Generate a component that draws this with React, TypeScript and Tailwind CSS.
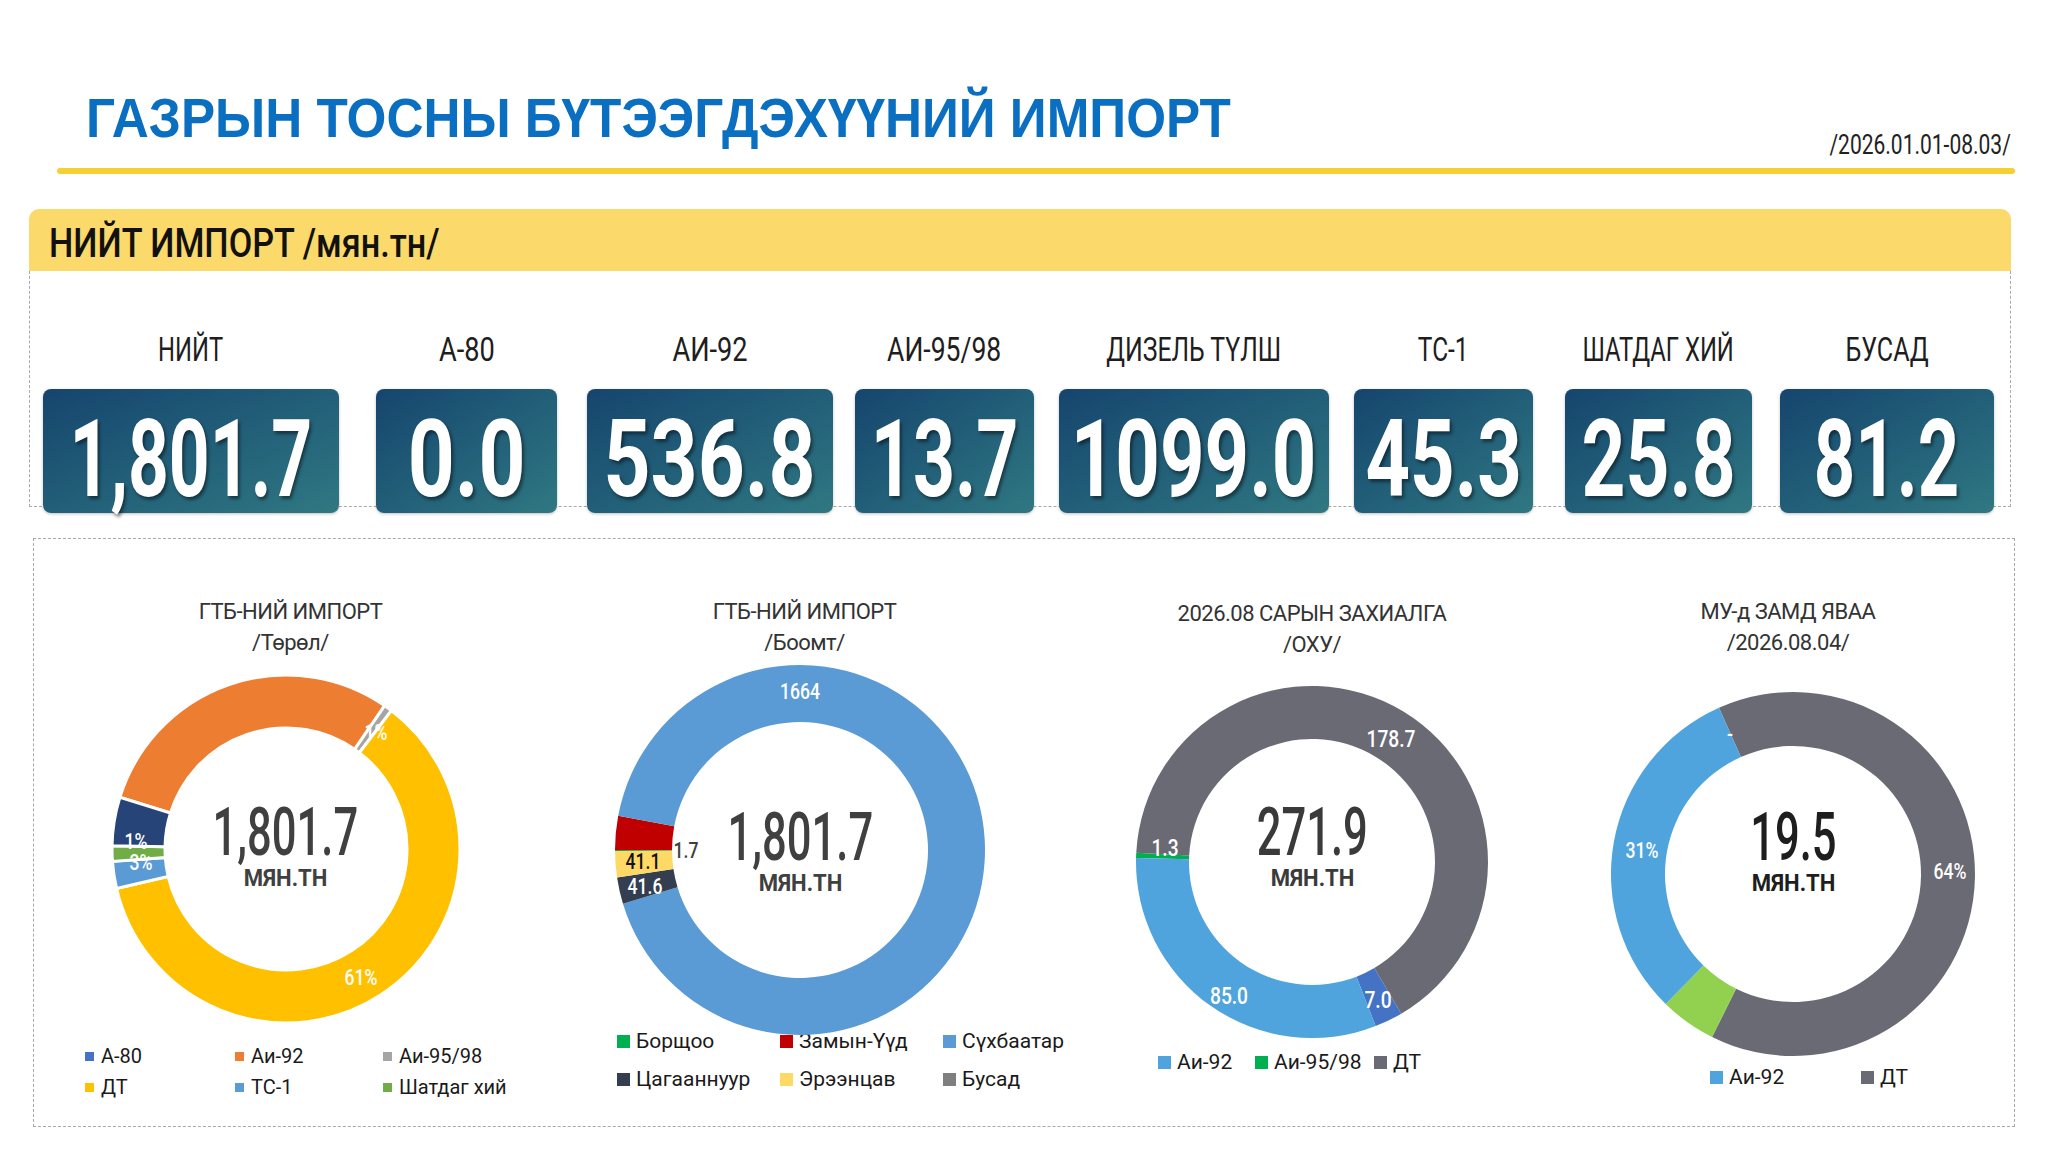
import React from "react";

type Seg = { v: number; c: string };
type Lbl = { x: number; y: number; t: string; fill?: string; size?: number };

function arc(cx: number, cy: number, R: number, r: number, a0: number, a1: number) {
  const rad = (d: number) => (d * Math.PI) / 180;
  const p = (rr: number, a: number) => [cx + rr * Math.sin(rad(a)), cy - rr * Math.cos(rad(a))];
  const large = a1 - a0 > 180 ? 1 : 0;
  const [x0, y0] = p(R, a0);
  const [x1, y1] = p(R, a1);
  const [x2, y2] = p(r, a1);
  const [x3, y3] = p(r, a0);
  return `M${x0} ${y0} A${R} ${R} 0 ${large} 1 ${x1} ${y1} L${x2} ${y2} A${r} ${r} 0 ${large} 0 ${x3} ${y3} Z`;
}

function Donut({
  size,
  R,
  r,
  start,
  segs,
  stroke,
  labels,
}: {
  size: number;
  R: number;
  r: number;
  start: number;
  segs: Seg[];
  stroke?: boolean;
  labels: Lbl[];
}) {
  const total = segs.reduce((s, x) => s + x.v, 0);
  let a = start;
  const c = size / 2;
  return (
    <svg width={size} height={size} viewBox={`0 0 ${size} ${size}`} className="block">
      {segs.map((s, i) => {
        const a0 = a;
        const a1 = a + (s.v / total) * 360;
        a = a1;
        return (
          <path
            key={i}
            d={arc(c, c, R, r, a0, a1)}
            fill={s.c}
            stroke={stroke ? "#ffffff" : "none"}
            strokeWidth={stroke ? 3 : 0}
          />
        );
      })}
      {labels.map((l, i) => (
        <text
          key={i}
          transform={`translate(${l.x} ${l.y}) scale(0.8 1)`}
          textAnchor="middle"
          dominantBaseline="central"
          fontSize={l.size ?? 22}
          fontWeight={500}
          fill={l.fill ?? "#ffffff"}
          style={{ fontFamily: "Roboto, sans-serif" }}
        >
          {l.t}
        </text>
      ))}
    </svg>
  );
}

const kpis = [
  { label: "НИЙТ", value: "1,801.7", w: "w-[296px]", ml: "ml-[13px]", ls: "scale-x-[0.7]", vs: "scale-x-[0.66]" },
  { label: "А-80", value: "0.0", w: "w-[181px]", ml: "ml-[37px]", ls: "scale-x-[0.8]", vs: "scale-x-[0.76]" },
  { label: "АИ-92", value: "536.8", w: "w-[246px]", ml: "ml-[30px]", ls: "scale-x-[0.8]", vs: "scale-x-[0.76]" },
  { label: "АИ-95/98", value: "13.7", w: "w-[179px]", ml: "ml-[22px]", ls: "scale-x-[0.78]", vs: "scale-x-[0.68]" },
  { label: "ДИЗЕЛЬ ТҮЛШ", value: "1099.0", w: "w-[270px]", ml: "ml-[25px]", ls: "scale-x-[0.73]", vs: "scale-x-[0.72]" },
  { label: "ТС-1", value: "45.3", w: "w-[179px]", ml: "ml-[25px]", ls: "scale-x-[0.72]", vs: "scale-x-[0.72]" },
  { label: "ШАТДАГ ХИЙ", value: "25.8", w: "w-[187px]", ml: "ml-[32px]", ls: "scale-x-[0.7]", vs: "scale-x-[0.71]" },
  { label: "БУСАД", value: "81.2", w: "w-[214px]", ml: "ml-[28px]", ls: "scale-x-[0.74]", vs: "scale-x-[0.67]" },
];

function Item({ sq, t }: { sq: string; t: string }) {
  return (
    <div className="flex items-center whitespace-nowrap">
      <span className={sq} />
      <span>{t}</span>
    </div>
  );
}

function Center({ top, num, color }: { top: string; num: string; color: string }) {
  return (
    <div className={`absolute left-0 right-0 ${top} flex flex-col items-center ${color}`}>
      <span className="inline-block whitespace-nowrap text-[66px] leading-[62px] font-medium scale-x-[0.66]">{num}</span>
      <span className="inline-block whitespace-nowrap text-[24px] leading-[28px] font-bold scale-x-[0.92]">МЯН.ТН</span>
    </div>
  );
}

function Title({ a, b, pt }: { a: string; b: string; pt: string }) {
  return (
    <div className={`${pt} flex flex-col items-center text-[22px] leading-[31px] text-[#333333] tracking-[-0.5px] whitespace-nowrap`}>
      <span>{a}</span>
      <span>{b}</span>
    </div>
  );
}

export default function App() {
  return (
    <div className="w-[2048px] h-[1152px] bg-white overflow-hidden font-['Roboto',sans-serif] text-[#1a1a1a]">
      {/* Header */}
      <div className="pt-[90px] flex justify-between items-start">
        <h1 className="pl-[86px] text-[56px] leading-none font-bold text-[#0b6fc1] font-['Liberation_Sans',Arial,sans-serif] whitespace-nowrap">
          <span className="inline-block origin-left scale-x-[0.915]">ГАЗРЫН ТОСНЫ БҮТЭЭГДЭХҮҮНИЙ ИМПОРТ</span>
        </h1>
        <div className="mt-[41px] pr-[37px] text-[28px] leading-[28px] text-[#222222] whitespace-nowrap">
          <span className="inline-block origin-right scale-x-[0.75]">/2026.01.01-08.03/</span>
        </div>
      </div>
      <div className="mt-[9px] ml-[57px] mr-[33px] h-[6px] rounded-full bg-[#f6cf33]" />

      {/* Section 1 */}
      <div className="mt-[35px] ml-[29px] w-[1982px]">
        <div className="h-[62px] rounded-t-[10px] bg-[#fbd96a] flex items-center pl-[20px] pt-[6px]">
          <span className="inline-block origin-left scale-x-[0.835] text-[41px] leading-none font-medium text-[#111111] whitespace-nowrap">
            НИЙТ ИМПОРТ /мян.тн/
          </span>
        </div>
        <div className="h-[236px] border-x border-b border-dashed border-[#a9a9a9] flex items-start">
          {kpis.map((k) => (
            <div key={k.label} className={`${k.w} ${k.ml} shrink-0 flex flex-col items-center`}>
              <div className="mt-[58px] h-[40px] text-[34px] leading-[40px] text-[#1e1e1e] whitespace-nowrap">
                <span className={`inline-block ${k.ls}`}>{k.label}</span>
              </div>
              <div className="mt-[20px] w-full h-[124px] rounded-[8px] bg-linear-to-br from-[#16456d] to-[#307882] shadow-[0_1px_3px_rgba(0,0,0,0.25)] flex items-center justify-center pt-[16px] text-white">
                <span
                  className={`inline-block whitespace-nowrap text-[108px] leading-none font-bold [text-shadow:3px_3px_4px_rgba(0,0,0,0.45)] ${k.vs}`}
                >
                  {k.value}
                </span>
              </div>
            </div>
          ))}
        </div>
      </div>

      {/* Section 2 */}
      <div className="mt-[31px] ml-[33px] w-[1982px] h-[589px] border border-dashed border-[#a9a9a9] flex">
        {/* Chart 1 */}
        <div className="w-[513px] shrink-0 flex flex-col items-center">
          <Title a="ГТБ-НИЙ ИМПОРТ" b="/Төрөл/" pt="pt-[57px]" />
          <div className="relative mt-[11px] mr-[10px] w-[360px] h-[360px]">
            <Donut
              size={360}
              R={174}
              r={121}
              start={287.3}
              stroke
              segs={[
                { v: 536.8, c: "#ED7D31" },
                { v: 13.7, c: "#A5A5A5" },
                { v: 1099.0, c: "#FFC000" },
                { v: 45.3, c: "#5B9BD5" },
                { v: 25.8, c: "#70AD47" },
                { v: 81.2, c: "#264478" },
              ]}
              labels={[
                { x: 270, y: 64, t: "1%" },
                { x: 30, y: 173, t: "1%" },
                { x: 35, y: 194, t: "3%" },
                { x: 255, y: 309, t: "61%" },
              ]}
            />
            <Center top="top-[133px]" num="1,801.7" color="text-[#404040]" />
          </div>
          <div className="self-start ml-[51px] mt-[12px] grid grid-cols-[150px_148px_auto] text-[20px] leading-[31px]">
            <Item sq="w-[9px] h-[9px] mr-[7px] bg-[#4472C4]" t="А-80" />
            <Item sq="w-[9px] h-[9px] mr-[7px] bg-[#ED7D31]" t="Аи-92" />
            <Item sq="w-[9px] h-[9px] mr-[7px] bg-[#A5A5A5]" t="Аи-95/98" />
            <Item sq="w-[9px] h-[9px] mr-[7px] bg-[#FFC000]" t="ДТ" />
            <Item sq="w-[9px] h-[9px] mr-[7px] bg-[#5B9BD5]" t="ТС-1" />
            <Item sq="w-[9px] h-[9px] mr-[7px] bg-[#70AD47]" t="Шатдаг хий" />
          </div>
        </div>

        {/* Chart 2 */}
        <div className="w-[515px] shrink-0 flex flex-col items-center">
          <Title a="ГТБ-НИЙ ИМПОРТ" b="/Боомт/" pt="pt-[57px]" />
          <div className="relative mt-[2px] mr-[9px] w-[380px] h-[380px]">
            <Donut
              size={380}
              R={185}
              r={128}
              start={269.66}
              segs={[
                { v: 1.7, c: "#00B050" },
                { v: 53.3, c: "#C00000" },
                { v: 1664, c: "#5B9BD5" },
                { v: 41.6, c: "#333F50" },
                { v: 41.1, c: "#FFD966" },
              ]}
              labels={[
                { x: 190, y: 32, t: "1664" },
                { x: 76, y: 191, t: "1.7", fill: "#404040" },
                { x: 33, y: 202, t: "41.1", fill: "#111111" },
                { x: 35, y: 227, t: "41.6" },
              ]}
            />
            <Center top="top-[147px]" num="1,801.7" color="text-[#404040]" />
          </div>
          <div className="self-start ml-[70px] -mt-[14px] grid grid-cols-[163px_163px_auto] gap-y-[8px] text-[21px] leading-[30px]">
            <Item sq="w-[13px] h-[13px] mr-[6px] bg-[#00B050]" t="Борщоо" />
            <Item sq="w-[13px] h-[13px] mr-[6px] bg-[#C00000]" t="Замын-Үүд" />
            <Item sq="w-[13px] h-[13px] mr-[6px] bg-[#5B9BD5]" t="Сүхбаатар" />
            <Item sq="w-[13px] h-[13px] mr-[6px] bg-[#333F50]" t="Цагааннуур" />
            <Item sq="w-[13px] h-[13px] mr-[6px] bg-[#FFD966]" t="Эрээнцав" />
            <Item sq="w-[13px] h-[13px] mr-[6px] bg-[#7F7F7F]" t="Бусад" />
          </div>
        </div>

        {/* Chart 3 */}
        <div className="w-[500px] shrink-0 flex flex-col items-center">
          <Title a="2026.08 САРЫН ЗАХИАЛГА" b="/ОХУ/" pt="pt-[59px]" />
          <div className="relative mt-[22px] w-[360px] h-[360px]">
            <Donut
              size={360}
              R={176}
              r={123}
              start={271.3}
              segs={[
                { v: 1.3, c: "#00B050" },
                { v: 178.7, c: "#6A6A74" },
                { v: 7.0, c: "#4472C4" },
                { v: 85.0, c: "#4FA4DD" },
              ]}
              labels={[
                { x: 259, y: 57, t: "178.7", size: 24 },
                { x: 33, y: 166, t: "1.3", size: 24 },
                { x: 97, y: 314, t: "85.0", size: 24 },
                { x: 246, y: 318, t: "7.0", size: 24 },
              ]}
            />
            <Center top="top-[120px]" num="271.9" color="text-[#3a3a3a]" />
          </div>
          <div className="self-start ml-[96px] mt-[5px] grid grid-cols-[97px_119px_auto] text-[21px] leading-[30px]">
            <Item sq="w-[13px] h-[13px] mr-[6px] bg-[#4FA4DD]" t="Аи-92" />
            <Item sq="w-[13px] h-[13px] mr-[6px] bg-[#00B050]" t="Аи-95/98" />
            <Item sq="w-[13px] h-[13px] mr-[6px] bg-[#6A6A74]" t="ДТ" />
          </div>
        </div>

        {/* Chart 4 */}
        <div className="w-[452px] shrink-0 flex flex-col items-center">
          <Title a="МУ-д ЗАМД ЯВАА" b="/2026.08.04/" pt="pt-[57px]" />
          <div className="relative mt-[31px] ml-[10px] w-[370px] h-[370px]">
            <Donut
              size={370}
              R={182}
              r={128}
              start={336}
              segs={[
                { v: 64, c: "#6A6A74" },
                { v: 5, c: "#92D050" },
                { v: 31, c: "#4FA4DD" },
              ]}
              labels={[
                { x: 122, y: 46, t: "-" },
                { x: 34, y: 162, t: "31%" },
                { x: 342, y: 183, t: "64%" },
              ]}
            />
            <Center top="top-[118px]" num="19.5" color="text-[#1e1e1e]" />
          </div>
          <div className="self-start ml-[148px] mt-[3px] grid grid-cols-[151px_auto] text-[21px] leading-[30px]">
            <Item sq="w-[13px] h-[13px] mr-[6px] bg-[#4FA4DD]" t="Аи-92" />
            <Item sq="w-[13px] h-[13px] mr-[6px] bg-[#6A6A74]" t="ДТ" />
          </div>
        </div>
      </div>
    </div>
  );
}
